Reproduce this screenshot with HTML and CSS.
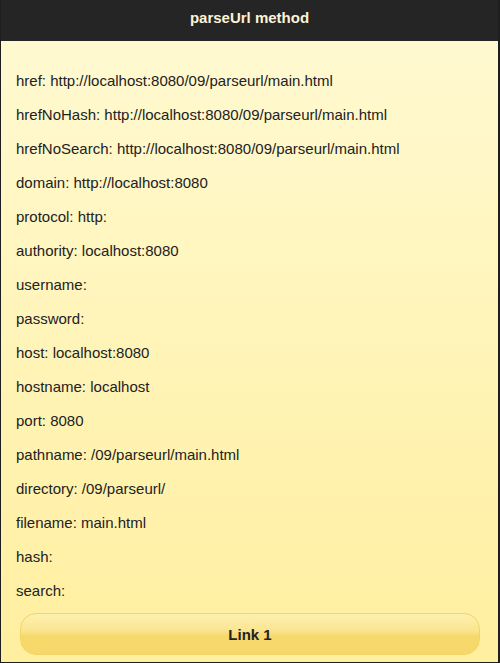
FILE: index.html
```html
<!DOCTYPE html>
<html>
<head>
<meta charset="utf-8">
<link rel="stylesheet" href="styles.css">
</head>
<body>
<div class="page">
  <header class="bar"><h1 class="title">parseUrl method</h1></header>
  <main class="content">
    <div class="lines">
      <div class="line">href: http://localhost:8080/09/parseurl/main.html</div>
      <div class="line">hrefNoHash: http://localhost:8080/09/parseurl/main.html</div>
      <div class="line">hrefNoSearch: http://localhost:8080/09/parseurl/main.html</div>
      <div class="line">domain: http://localhost:8080</div>
      <div class="line">protocol: http:</div>
      <div class="line">authority: localhost:8080</div>
      <div class="line">username:</div>
      <div class="line">password:</div>
      <div class="line">host: localhost:8080</div>
      <div class="line">hostname: localhost</div>
      <div class="line">port: 8080</div>
      <div class="line">pathname: /09/parseurl/main.html</div>
      <div class="line">directory: /09/parseurl/</div>
      <div class="line">filename: main.html</div>
      <div class="line">hash:</div>
      <div class="line">search:</div>
    </div>
    <a class="btn">Link 1</a>
  </main>
</div>
</body>
</html>
```
FILE: styles.css
```css
html, body { margin: 0; padding: 0; }
body {
  width: 500px;
  height: 663px;
  font-family: "Liberation Sans", Arial, sans-serif;
  background: #1e1e1e;
}
.page {
  box-sizing: border-box;
  width: 500px;
  height: 663px;
  border-left: 1px solid #1e1e1e;
  border-right: 2px solid #1e1e1e;
  border-bottom: 1px solid #1e1e1e;
  display: flex;
  flex-direction: column;
  background: linear-gradient(#fffad4, #ffef9f);
}
.bar {
  height: 41px;
  flex: none;
  background: #262526;
  display: flex;
  justify-content: center;
}
.title {
  margin: 0;
  padding-top: 9px;
  font-size: 15px;
  font-weight: bold;
  color: #fbf3d4;
  line-height: 18px;
}
.content {
  flex: 1;
  display: flex;
  flex-direction: column;
  padding: 30px 18px 0 15px;
}
.lines {
  display: flex;
  flex-direction: column;
  gap: 14px;
}
.line {
  font-size: 15px;
  line-height: 20px;
  color: #222;
}
.btn {
  margin-top: 12px;
  margin-left: 4px;
  height: 42px;
  box-sizing: border-box;
  border: 1px solid #f3d46a;
  border-radius: 16px;
  background: linear-gradient(#fdf0b0 0%, #fbe592 40%, #f6d96c 55%, #f6d86a 100%);
  display: flex;
  align-items: center;
  justify-content: center;
  font-size: 15px;
  font-weight: bold;
  color: #222;
}
```
